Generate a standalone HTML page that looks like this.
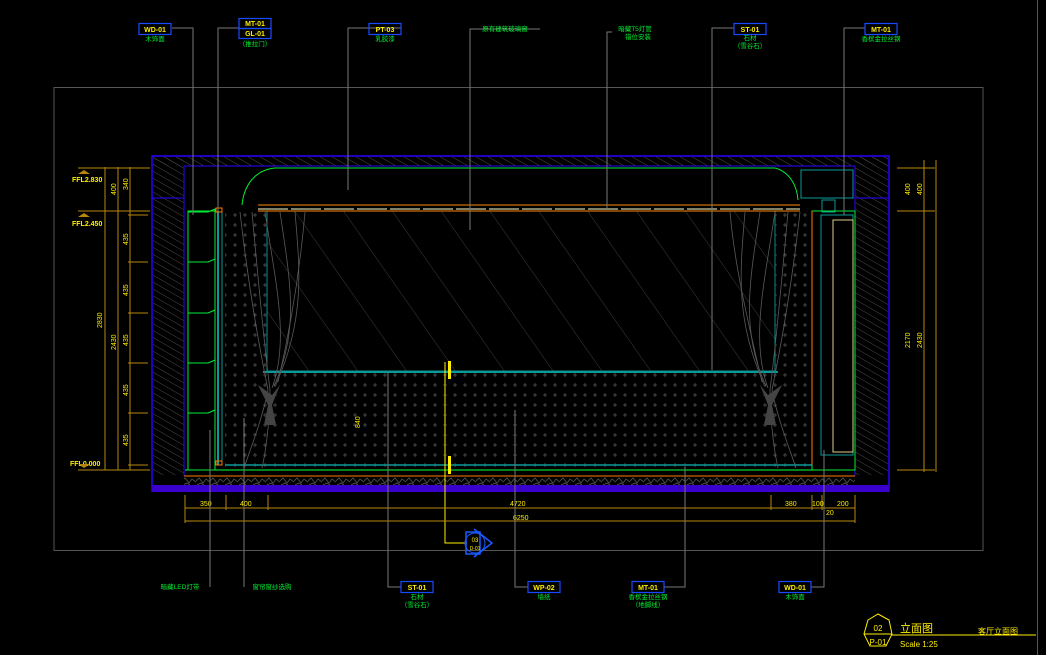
<!DOCTYPE html>
<html><head><meta charset="utf-8"><style>
html,body{margin:0;padding:0;background:#000;width:1046px;height:655px;overflow:hidden}
svg{display:block}
text{font-family:"Liberation Sans","Noto Sans CJK SC",sans-serif}
</style></head><body>
<svg width="1046" height="655" viewBox="0 0 1046 655" xmlns="http://www.w3.org/2000/svg">
<defs>
<pattern id="hatch" width="6" height="6" patternUnits="userSpaceOnUse" patternTransform="rotate(-60)">
<line x1="0" y1="0" x2="0" y2="6" stroke="#4a4a4a" stroke-width="1"/></pattern>
<pattern id="dots" width="10" height="10" patternUnits="userSpaceOnUse">
<path d="M3 5h4M5 3v4" stroke="#555" stroke-width="0.8"/></pattern>
<pattern id="conc" width="14" height="9" patternUnits="userSpaceOnUse">
<path d="M0 4l3-3 4 5 3-4 4 3M1 8l4-2 3 2" stroke="#555" stroke-width="0.8" fill="none"/></pattern>
<pattern id="diag" width="40" height="40" patternUnits="userSpaceOnUse" patternTransform="rotate(-35)">
<line x1="0" y1="0" x2="0" y2="40" stroke="#3c3c3c" stroke-width="1"/></pattern>
</defs>
<!-- frames -->
<rect x="54" y="87.5" width="929" height="463" fill="none" stroke="#555" stroke-width="1"/>
<line x1="1037.5" y1="0" x2="1037.5" y2="655" stroke="#555"/>
<!-- walls -->
<rect x="152" y="156" width="737" height="335" fill="none" stroke="#2a00ff" stroke-width="1.5"/>
<rect x="153" y="157" width="735" height="9" fill="url(#hatch)"/>
<rect x="153" y="157" width="31" height="318" fill="url(#hatch)"/>
<rect x="855" y="157" width="33" height="318" fill="url(#hatch)"/>
<line x1="184" y1="166" x2="184" y2="476" stroke="#2a00ff"/>
<line x1="855" y1="166" x2="855" y2="476" stroke="#2a00ff"/>
<line x1="184" y1="166" x2="855" y2="166" stroke="#2a00ff"/>
<line x1="152" y1="198" x2="184" y2="198" stroke="#2a00ff"/>
<line x1="855" y1="198" x2="889" y2="198" stroke="#2a00ff"/>
<rect x="184" y="476" width="671" height="9" fill="url(#conc)"/>
<rect x="152" y="485" width="737" height="7" fill="#3a00cc"/>
<line x1="184" y1="476" x2="855" y2="476" stroke="#ff7a00" stroke-width="1"/>
<!-- window area -->
<rect x="225" y="211" width="585" height="258" fill="url(#dots)"/>
<rect x="267" y="211" width="508" height="160" fill="#000"/>
<rect x="267" y="211" width="508" height="160" fill="url(#diag)"/>
<rect x="267" y="211" width="508" height="160" fill="none" stroke="#0a8a8a"/>
<line x1="263" y1="372" x2="778" y2="372" stroke="#0a9a9a" stroke-width="2"/>
<line x1="225" y1="465" x2="812" y2="465" stroke="#0a9a9a" stroke-width="1.5"/>
<line x1="185" y1="470" x2="855" y2="470" stroke="#00ff33" stroke-width="1"/>
<!-- curtains -->
<g stroke="#5a5a5a" fill="none" stroke-width="0.8">
<path d="M240 212 C250 300 262 360 268 390 C262 420 250 450 244 468"/>
<path d="M252 212 C260 300 266 360 270 390 C270 420 266 450 262 468"/>
<path d="M265 212 C275 280 290 340 272 388"/>
<path d="M280 212 C290 280 300 330 274 386"/>
<path d="M295 212 C300 270 305 320 276 384"/>
<path d="M305 212 C300 270 290 330 278 382"/>
<path d="M800 212 C790 300 778 360 772 390 C778 420 790 450 796 468"/>
<path d="M788 212 C780 300 774 360 770 390 C770 420 774 450 778 468"/>
<path d="M775 212 C765 280 750 340 768 388"/>
<path d="M760 212 C750 280 740 330 766 386"/>
<path d="M745 212 C740 270 735 320 764 384"/>
<path d="M730 212 C735 270 750 330 762 382"/>
</g>
<path d="M258 385 l14 10 l8 -10 l-8 20 l4 20 h-12 l4 -20z" fill="#444"/>
<path d="M782 385 l-14 10 l-8 -10 l8 20 l-4 20 h12 l-4 -20z" fill="#444"/>
<!-- ceiling -->
<path d="M242 205 C244 185 255 170 275 168 H775 C790 172 797 186 798 200" fill="none" stroke="#00ee33" stroke-width="1"/>
<line x1="258" y1="205" x2="800" y2="205" stroke="#ff8a00"/>
<line x1="258" y1="209" x2="800" y2="209" stroke="#ffffcc" stroke-dasharray="30 3"/>
<line x1="258" y1="211" x2="800" y2="211" stroke="#ff8a00"/>
<rect x="801" y="170" width="52" height="28" fill="none" stroke="#0a9a9a"/>
<rect x="822" y="200" width="13" height="12" fill="none" stroke="#0a9a9a"/>
<!-- left shelves -->
<rect x="188" y="211" width="27" height="259" fill="none" stroke="#00ee33"/>
<g stroke="#00ee33" fill="none">
<path d="M188 212h20l7-3v5"/><path d="M188 262h20l7-3v5"/><path d="M188 313h20l7-3v5"/><path d="M188 363h20l7-3v5"/><path d="M188 413h20l7-3v5"/>
</g>
<line x1="218" y1="211" x2="218" y2="465" stroke="#0a9a9a" stroke-width="2"/>
<line x1="222" y1="211" x2="222" y2="465" stroke="#0a9a9a"/>
<rect x="216" y="208" width="6" height="4" fill="none" stroke="#ff7a00"/>
<rect x="216" y="461" width="6" height="4" fill="none" stroke="#ff7a00"/>
<!-- right panel -->
<rect x="812" y="211" width="43" height="259" fill="none" stroke="#00ee33"/>
<rect x="821" y="215" width="32" height="240" fill="none" stroke="#0a9a9a"/>
<rect x="833" y="220" width="20" height="232" fill="none" stroke="#ddcc88"/>
<line x1="812" y1="211" x2="812" y2="465" stroke="#ff7a00"/>
<!-- section marker -->
<rect x="448" y="361" width="3" height="18" fill="#ffee00"/>
<rect x="448" y="456" width="3" height="18" fill="#ffee00"/>
<path d="M445 362V543h22" stroke="#ffee00" fill="none"/>
<path d="M474 529 L492 543 L474 557 M466 532 h14 v22 h-14z" fill="none" stroke="#1a5aff" stroke-width="1.5"/>
<circle cx="475" cy="543" r="10" fill="none" stroke="#1a5aff"/>
<text x="475" y="542" font-size="6" fill="#ffee00" text-anchor="middle">03</text>
<text x="475" y="550" font-size="5" fill="#ffee00" text-anchor="middle">D-01</text>
<!-- dims left -->
<g stroke="#b8860b" fill="none">
<line x1="105" y1="167" x2="105" y2="470"/><line x1="118" y1="167" x2="118" y2="470"/><line x1="130" y1="167" x2="130" y2="470"/>
<line x1="78" y1="168" x2="150" y2="168"/><line x1="78" y1="211" x2="150" y2="211"/><line x1="78" y1="470" x2="150" y2="470"/>
<path d="M128 262h20M128 313h20M128 363h20M128 413h20M128 465h20M128 215h20"/>
</g>
<g stroke="#b8860b"><line x1="897" y1="168" x2="935" y2="168"/><line x1="897" y1="211" x2="935" y2="211"/><line x1="897" y1="470" x2="935" y2="470"/>
<line x1="924" y1="160" x2="924" y2="472"/><line x1="936" y1="160" x2="936" y2="472"/></g>
<g fill="#ffee00" font-size="7" font-weight="bold">
<text x="72" y="182">FFL2.830</text><text x="72" y="226">FFL2.450</text><text x="70" y="466">FFL0.000</text>
</g>
<path d="M78 174l6-4 6 4z M78 217l6-4 6 4z M78 464l6 4 6-4z" fill="#b8860b"/>
<g fill="#ffee00" font-size="7">
<text transform="translate(116,195) rotate(-90)">400</text>
<text transform="translate(102,328) rotate(-90)">2830</text>
<text transform="translate(116,350) rotate(-90)">2430</text>
<text transform="translate(128,245) rotate(-90)">435</text>
<text transform="translate(128,296) rotate(-90)">435</text>
<text transform="translate(128,346) rotate(-90)">435</text>
<text transform="translate(128,396) rotate(-90)">435</text>
<text transform="translate(128,446) rotate(-90)">435</text>
<text transform="translate(128,190) rotate(-90)">340</text>
<text transform="translate(910,195) rotate(-90)">400</text>
<text transform="translate(922,195) rotate(-90)">400</text>
<text transform="translate(910,348) rotate(-90)">2170</text>
<text transform="translate(922,348) rotate(-90)">2430</text>
<text transform="translate(360,428) rotate(-90)">840</text>
</g>
<!-- bottom dims -->
<g stroke="#b8860b"><line x1="185" y1="508" x2="855" y2="508"/><line x1="185" y1="521" x2="855" y2="521"/>
<path d="M185 495v28M226 495v15M268 495v15M771 495v15M812 495v15M822 495v15M855 495v28"/></g>
<g fill="#ffee00" font-size="7">
<text x="200" y="506">350</text><text x="240" y="506">400</text><text x="510" y="506">4720</text><text x="513" y="520">6250</text>
<text x="785" y="506">380</text><text x="812" y="506">100</text><text x="837" y="506">200</text><text x="826" y="515">20</text>
</g>
<!-- leaders -->
<g stroke="#777" fill="none">
<path d="M172 28H193V215"/><path d="M239 28H218V215"/><path d="M401 28H348V190"/>
<path d="M540 29H470V230"/><path d="M612 32H607V208"/><path d="M734 28H712V370"/><path d="M865 28H844V215"/>
<path d="M210 587V430"/><path d="M244 587V418"/><path d="M401 587H388V372"/><path d="M528 587H515V410"/><path d="M664 587H685V467"/><path d="M811 587H824V450"/>
</g>
<!-- labels -->
<g font-size="7" font-weight="bold" text-anchor="middle">
<g fill="none" stroke="#1a4aff" stroke-width="1.2">
<rect x="139" y="23.5" width="32" height="11"/><rect x="239" y="18.5" width="32" height="10"/><rect x="239" y="28.5" width="32" height="10"/>
<rect x="369" y="23.5" width="32" height="11"/><rect x="734" y="23.5" width="32" height="11"/><rect x="865" y="23.5" width="32" height="11"/>
<rect x="401" y="581.5" width="32" height="11"/><rect x="528" y="581.5" width="32" height="11"/><rect x="632" y="581.5" width="32" height="11"/><rect x="779" y="581.5" width="32" height="11"/>
</g>
<g fill="#ffee00">
<text x="155" y="32">WD-01</text><text x="255" y="26">MT-01</text><text x="255" y="36">GL-01</text><text x="385" y="32">PT-03</text>
<text x="750" y="32">ST-01</text><text x="881" y="32">MT-01</text>
<text x="417" y="590">ST-01</text><text x="544" y="590">WP-02</text><text x="648" y="590">MT-01</text><text x="795" y="590">WD-01</text>
</g>
<g fill="#00ee33" font-size="6.5" font-weight="normal">
<text x="155" y="41">木饰面</text><text x="255" y="46">（推拉门）</text><text x="385" y="41">乳胶漆</text>
<text x="505" y="31">原有建筑玻璃窗</text><text x="635" y="31">暗藏T5灯管</text><text x="638" y="39">错位安装</text>
<text x="750" y="40">石材</text><text x="750" y="48">（雪谷石）</text><text x="881" y="41">香槟金拉丝钢</text>
<text x="417" y="599">石材</text><text x="417" y="607">（雪谷石）</text><text x="544" y="599">墙纸</text>
<text x="648" y="599">香槟金拉丝钢</text><text x="648" y="607">（地脚线）</text><text x="795" y="599">木饰面</text>
<text x="180" y="589">暗藏LED灯带</text><text x="272" y="589">窗帘窗纱选购</text>
</g>
</g>
<!-- title block -->
<polygon points="868,620 878,614 889,620 892,634 886,646 870,646 864,634" fill="none" stroke="#ffee00"/>
<line x1="864" y1="634" x2="892" y2="634" stroke="#ffee00"/>
<text x="878" y="631" font-size="8" fill="#ffee00" text-anchor="middle">02</text>
<text x="878" y="645" font-size="8" fill="#ffee00" text-anchor="middle">P-01</text>
<line x1="892" y1="635" x2="1036" y2="635" stroke="#ffee00"/>
<text x="900" y="632" font-size="11" fill="#ffee00">立面图</text>
<text x="900" y="647" font-size="8" fill="#ffee00">Scale 1:25</text>
<text x="978" y="634" font-size="8" fill="#ffee00">客厅立面图</text>
</svg>
</body></html>
